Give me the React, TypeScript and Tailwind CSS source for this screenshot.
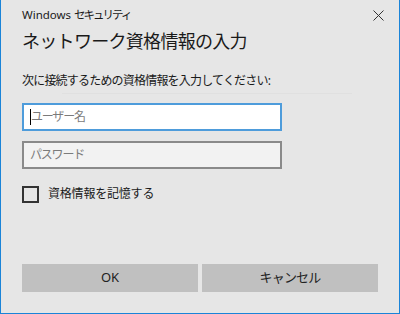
import React from "react";

export default function App() {
  const font = { fontFamily: '"Noto Sans", "Noto Sans CJK JP", sans-serif' };
  return (
    <div
      className="w-[400px] h-[314px] bg-[#e6e6e6] border-x border-b border-[#1a84d8] flex flex-col text-[#1a1a1a]"
      style={font}
    >
      <div className="h-[30px] flex items-center justify-between pl-[21px] pr-[14px]">
        <span className="text-[11.5px] leading-none">
          Windows <span className="tracking-[-2px]">セキュリティ</span>
        </span>
        <svg width="11" height="11" viewBox="0 0 11 11" className="mr-[1px]">
          <path d="M0.5 0.5 L10.5 10.5 M10.5 0.5 L0.5 10.5" stroke="#333" strokeWidth="1" />
        </svg>
      </div>
      <div className="px-[21px] flex flex-col">
        <div className="text-[18px] leading-[24px] mt-[-1px] tracking-[-0.7px]">ネットワーク資格情報の入力</div>
        <div className="text-[12px] leading-[16px] mt-[20px] tracking-[-0.8px]">次に接続するための資格情報を入力してください:</div>
        <div className="h-px mt-[4px] ml-[40px] w-[290px] bg-[#e0e0e0]" />
        <div className="mt-[9px] w-[260px] h-[28px] bg-white border-2 border-[#4e9cdb] flex items-center pl-[6px]">
          <span className="w-px h-[16px] bg-black" />
          <span className="text-[12px] text-[#7b7b7b] tracking-[-1.2px]">ユーザー名</span>
        </div>
        <div className="mt-[10px] w-[260px] h-[28px] bg-[#f2f2f2] border-2 border-[#8a8a8a] flex items-center pl-[6px]">
          <span className="text-[12px] text-[#7b7b7b] tracking-[-1.2px]">パスワード</span>
        </div>
        <div className="mt-[16px] flex items-center gap-[9px]">
          <div className="w-[17px] h-[17px] border-2 border-[#333]" />
          <span className="text-[12px] tracking-[-0.2px]">資格情報を記憶する</span>
        </div>
        <div className="mt-[61px] flex gap-[4px]">
          <div className="w-[176px] h-[28px] bg-[#c0c0c0] flex items-center justify-center text-[13px] text-[#222]">OK</div>
          <div className="w-[176px] h-[28px] bg-[#c0c0c0] flex items-center justify-center text-[13px] text-[#222] tracking-[-0.8px]">キャンセル</div>
        </div>
      </div>
    </div>
  );
}
